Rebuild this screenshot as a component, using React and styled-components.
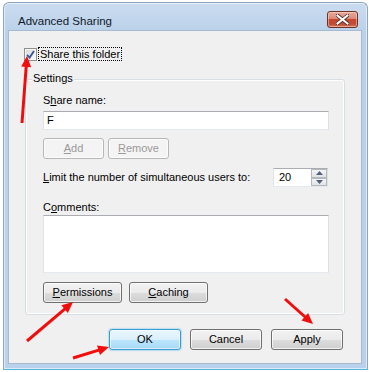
import React from 'react';
import styled, { createGlobalStyle } from 'styled-components';

const Global = createGlobalStyle`
  html, body { margin: 0; padding: 0; background: #ffffff; }
  body {
    font-family: "Segoe UI", "Liberation Sans", Arial, sans-serif;
    font-size: 11px;
    color: #000;
  }
  * { box-sizing: border-box; }
`;

const Page = styled.div`
  position: relative;
  width: 369px;
  height: 372px;
  padding: 2px 0 0 3px;
`;

const Window = styled.div`
  width: 365px;
  height: 368px;
  border: 1px solid #8ba4c0;
  border-bottom-color: #4cb6df;
  border-radius: 6px 6px 0 0;
  background: linear-gradient(#cbdcef, #b9d1ea 30px, #b9d1ea);
  box-shadow: inset 0 0 0 1px rgba(255, 255, 255, 0.55);
  padding: 0 6px 6px 5px;
  display: flex;
  flex-direction: column;
`;

const TitleBar = styled.div`
  height: 28px;
  display: flex;
  align-items: flex-start;
  justify-content: space-between;
  padding-left: 9px;
`;

const Title = styled.div`
  margin-top: 10px;
  line-height: 16px;
  font-size: 11.5px;
  color: #10182a;
`;

const CloseBtn = styled.div`
  margin-top: 8px;
  margin-right: 3px;
  width: 31px;
  height: 17px;
  border: 1px solid #6d3128;
  border-radius: 3px;
  background: linear-gradient(#e9a99b 0%, #d98a78 45%, #c7472e 50%, #c24a34 80%, #d4775f 100%);
  box-shadow: inset 0 0 0 1px rgba(255, 220, 210, 0.5);
  display: flex;
  align-items: center;
  justify-content: center;
`;

const Client = styled.div`
  flex: 1;
  background: #f0f0f0;
  box-shadow: 0 0 0 1px #a6bad2;
  padding: 17px 18px 0 15px;
  display: flex;
  flex-direction: column;
`;

const CheckRow = styled.div`
  display: flex;
  align-items: flex-start;
  height: 13px;
`;

const CheckBox = styled.div`
  width: 13px;
  height: 13px;
  border: 1px solid #8e8f8f;
  background: linear-gradient(135deg, #d8d8d8, #fbfbfb);
  box-shadow: inset 0 0 0 1px #f6f6f6;
  display: flex;
  align-items: center;
  justify-content: center;
`;

const FocusLabel = styled.div`
  margin: -1px 0 0 1px;
  height: 14px;
  line-height: 12px;
  padding: 0 1px;
  border: 1px dotted #000;
`;

const Group = styled.div`
  position: relative;
  margin: 18px 0 0 1px;
  width: 320px;
  border: 1px solid #d5dfe5;
  border-radius: 3px;
  box-shadow: inset 0 0 0 1px #ffffff;
  padding: 13px 15px 11px 17px;
  display: flex;
  flex-direction: column;
`;

const Legend = styled.div`
  position: absolute;
  top: -9px;
  left: 6px;
  padding: 0 1px;
  line-height: 15px;
  background: #f0f0f0;
`;

const Label = styled.div`
  line-height: 15px;
  margin-top: ${(p) => p.$mt || 0}px;
`;

const TextBox = styled.div`
  margin-top: ${(p) => p.$mt || 0}px;
  width: ${(p) => p.$w || 286}px;
  height: ${(p) => p.$h || 19}px;
  background: #fff;
  border: 1px solid;
  border-color: #abadb3 #dbdfe6 #e3e9ef #e2e3ea;
  padding: 0 3px;
  line-height: 17px;
`;

const Row = styled.div`
  margin-top: ${(p) => p.$mt || 0}px;
  display: flex;
  align-items: center;
  gap: ${(p) => p.$gap || 0}px;
  justify-content: ${(p) => p.$justify || 'flex-start'};
`;

const Btn = styled.button`
  width: ${(p) => p.$w}px;
  height: 21px;
  padding: 0;
  font: inherit;
  font-size: 11px;
  line-height: 19px;
  border-radius: 3px;
  border: 1px solid ${(p) => (p.$primary ? '#3a9bd2' : p.disabled ? '#b5b8ba' : '#707070')};
  color: ${(p) => (p.disabled ? '#9a9a9a' : '#000')};
  background: ${(p) =>
    p.$primary
      ? 'linear-gradient(#eaf6fd 0%, #d9f0fc 50%, #bee6fd 50%, #a7d9f5 100%)'
      : p.disabled
      ? '#f4f4f4'
      : 'linear-gradient(#f2f2f2 0%, #ebebeb 50%, #dddddd 50%, #cfcfcf 100%)'};
  box-shadow: ${(p) =>
    p.$primary
      ? 'inset 0 0 0 1px rgba(255,255,255,0.6), 0 0 1px 1px rgba(80,190,240,0.35)'
      : 'inset 0 0 0 1px rgba(255,255,255,0.7)'};
`;

const Spinner = styled.div`
  width: 55px;
  height: 19px;
  margin-right: 1px;
  display: flex;
  background: #fff;
  border: 1px solid;
  border-color: #abadb3 #dbdfe6 #e3e9ef #e2e3ea;
`;

const SpinValue = styled.div`
  flex: 1;
  padding-left: 5px;
  line-height: 17px;
`;

const SpinButtons = styled.div`
  width: 16px;
  display: flex;
  flex-direction: column;
`;

const SpinBtn = styled.div`
  flex: 1;
  border: 1px solid #b4b9c0;
  background: linear-gradient(#f6f6f6, #e2e2e2);
  display: flex;
  align-items: center;
  justify-content: center;
`;

const Footer = styled.div`
  margin-top: 14px;
  display: flex;
  justify-content: flex-end;
  gap: 9px;
`;

const Overlay = styled.svg`
  position: absolute;
  left: 0;
  top: 0;
  pointer-events: none;
`;

function Arrow({ x1, y1, x2, y2 }) {
  const dx = x2 - x1;
  const dy = y2 - y1;
  const len = Math.hypot(dx, dy);
  const ux = dx / len;
  const uy = dy / len;
  const L = 11;
  const W = 5;
  const bx = x2 - ux * L;
  const by = y2 - uy * L;
  const p1 = `${x2},${y2}`;
  const p2 = `${bx - uy * W},${by + ux * W}`;
  const p3 = `${bx + uy * W},${by - ux * W}`;
  return (
    <g>
      <line x1={x1} y1={y1} x2={bx + ux * 2} y2={by + uy * 2} stroke="#f20d0d" strokeWidth="3" />
      <polygon points={`${p1} ${p2} ${p3}`} fill="#f20d0d" />
    </g>
  );
}

export default function App() {
  return (
    <Page>
      <Global />
      <Window>
        <TitleBar>
          <Title>Advanced Sharing</Title>
          <CloseBtn>
            <svg width="13" height="11" viewBox="0 0 13 11">
              <path
                d="M1.5 1.5 L11.5 9.5 M11.5 1.5 L1.5 9.5"
                stroke="#4a2a25"
                strokeWidth="3.6"
                strokeLinecap="square"
              />
              <path
                d="M1.5 1.5 L11.5 9.5 M11.5 1.5 L1.5 9.5"
                stroke="#ffffff"
                strokeWidth="2"
                strokeLinecap="square"
              />
            </svg>
          </CloseBtn>
        </TitleBar>
        <Client>
          <CheckRow>
            <CheckBox>
              <svg width="9" height="9" viewBox="0 0 9 9">
                <path d="M1 4.8 L3.6 7.6 L8 1" stroke="#3e5797" strokeWidth="1.9" fill="none" />
              </svg>
            </CheckBox>
            <FocusLabel>Share this folder</FocusLabel>
          </CheckRow>
          <Group>
            <Legend>Settings</Legend>
            <Label>
              S<u>h</u>are name:
            </Label>
            <TextBox $mt={3}>F</TextBox>
            <Row $mt={8} $gap={4}>
              <Btn $w={61} disabled>
                <u>A</u>dd
              </Btn>
              <Btn $w={61} disabled>
                <u>R</u>emove
              </Btn>
            </Row>
            <Row $mt={9} $justify="space-between">
              <Label>
                <u>L</u>imit the number of simultaneous users to:
              </Label>
              <Spinner>
                <SpinValue>20</SpinValue>
                <SpinButtons>
                  <SpinBtn>
                    <svg width="7" height="4" viewBox="0 0 7 4">
                      <path d="M0 4 L3.5 0 L7 4 Z" fill="#4d6185" />
                    </svg>
                  </SpinBtn>
                  <SpinBtn>
                    <svg width="7" height="4" viewBox="0 0 7 4">
                      <path d="M0 0 L3.5 4 L7 0 Z" fill="#4d6185" />
                    </svg>
                  </SpinBtn>
                </SpinButtons>
              </Spinner>
            </Row>
            <Label $mt={13}>
              C<u>o</u>mments:
            </Label>
            <TextBox $h={58} />
            <Row $mt={9} $gap={7}>
              <Btn $w={79}>
                <u>P</u>ermissions
              </Btn>
              <Btn $w={79}>
                <u>C</u>aching
              </Btn>
            </Row>
          </Group>
          <Footer>
            <Btn $w={72} $primary>
              OK
            </Btn>
            <Btn $w={72}>Cancel</Btn>
            <Btn $w={72}>Apply</Btn>
          </Footer>
        </Client>
      </Window>
      <Overlay width="369" height="372" viewBox="0 0 369 372">
        <Arrow x1={22} y1={123} x2={27} y2={56} />
        <Arrow x1={27} y1={341} x2={73} y2={302} />
        <Arrow x1={73} y1={358} x2={109} y2={347} />
        <Arrow x1={285} y1={299} x2={313} y2={324} />
      </Overlay>
    </Page>
  );
}
